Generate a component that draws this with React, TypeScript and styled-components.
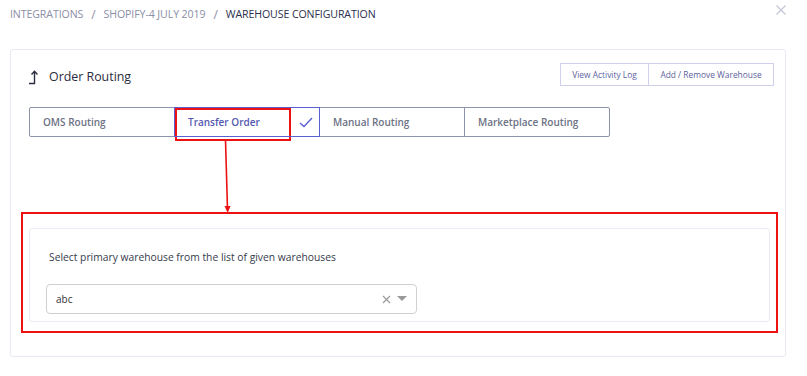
import React, { useState } from 'react';
import styled, { createGlobalStyle } from 'styled-components';

const GlobalStyle = createGlobalStyle`
  html, body {
    margin: 0;
    padding: 0;
    background: #ffffff;
    font-family: 'Open Sans', 'Noto Sans', sans-serif;
  }
`;

const Page = styled.div`
  position: relative;
  width: 807px;
  height: 376px;
  overflow: hidden;
  background: #fff;
`;

const TopBar = styled.div`
  display: flex;
  align-items: center;
  justify-content: space-between;
  height: 28px;
  padding: 0 20px 0 10px;
`;

const Crumbs = styled.div`
  display: flex;
  align-items: center;
  gap: 8px;
  font-size: 10.6px;
  letter-spacing: -0.1px;
`;

const Crumb = styled.span<{ $current?: boolean }>`
  color: ${p => (p.$current ? '#2c2f4d' : '#8a8ea6')};
`;

const Slash = styled.span`
  color: #8a8ea6;
  font-size: 12px;
`;

const CloseBtn = styled.button`
  border: none;
  background: none;
  padding: 0;
  width: 12px;
  height: 12px;
  display: flex;
  margin-top: -9px;
  cursor: pointer;
`;

const Card = styled.div`
  margin: 21px 0 0 10px;
  width: 776px;
  box-sizing: border-box;
  border: 1px solid #e9e9f4;
  border-radius: 3px;
  padding: 13px 11px 34px 17px;
`;

const HeaderRow = styled.div`
  display: flex;
  align-items: center;
  justify-content: space-between;
  height: 23px;
`;

const Title = styled.div`
  display: flex;
  align-items: center;
  gap: 8px;
  font-size: 12.4px;
  color: #2a2c40;
  margin-top: 4px;
`;

const ButtonGroup = styled.div`
  display: flex;
`;

const OutlineButton = styled.button<{ $w: number }>`
  width: ${p => p.$w}px;
  height: 23px;
  padding: 0;
  background: #fff;
  border: 1px solid #cfcfee;
  color: #5c5f9e;
  font-family: inherit;
  font-size: 8.4px;
  cursor: pointer;
  & + & {
    margin-left: -1px;
  }
`;

const Tabs = styled.div`
  display: flex;
  margin-top: 21px;
  margin-left: 1px;
`;

const Tab = styled.div<{ $active?: boolean }>`
  position: relative;
  width: 146px;
  height: 30px;
  box-sizing: border-box;
  display: flex;
  align-items: center;
  justify-content: space-between;
  padding: 0 6px 0 13px;
  border: 1px solid ${p => (p.$active ? '#5a5fd2' : '#8d93aa')};
  margin-left: -1px;
  z-index: ${p => (p.$active ? 1 : 0)};
  font-size: 10px;
  font-weight: 600;
  color: ${p => (p.$active ? '#5458b0' : '#6d7285')};
  cursor: pointer;
  &:first-child {
    margin-left: 0;
    border-radius: 2px 0 0 2px;
  }
  &:last-child {
    border-radius: 0 2px 2px 0;
  }
`;

const Panel = styled.div`
  margin: 91px 4px 0 1px;
  height: 94px;
  box-sizing: border-box;
  border: 1px solid #ebebf5;
  border-radius: 3px;
  padding: 20px 0 0 19px;
`;

const Label = styled.div`
  font-size: 10.3px;
  color: #363a4c;
  line-height: 16px;
`;

const SelectBox = styled.div`
  margin-top: 19px;
  width: 371px;
  height: 30px;
  box-sizing: border-box;
  border: 1px solid #cfcfd4;
  border-radius: 4px;
  display: flex;
  align-items: center;
  padding: 0 9px 0 9px;
  margin-left: -3px;
`;

const SelectValue = styled.span`
  flex: 1;
  font-size: 10px;
  color: #333;
`;

const SelectIcons = styled.div`
  display: flex;
  align-items: center;
  gap: 6px;
  color: #999;
`;

// screenshot annotations
const RedBox = styled.div`
  position: absolute;
  border: 2px solid #ee1111;
  box-sizing: border-box;
  pointer-events: none;
`;

const ArrowSvg = styled.svg`
  position: absolute;
  left: 218px;
  top: 139px;
  pointer-events: none;
`;

const tabs = ['OMS Routing', 'Transfer Order', 'Manual Routing', 'Marketplace Routing'];

export default function App() {
  const [active, setActive] = useState(1);
  const [value, setValue] = useState('abc');

  return (
    <Page>
      <GlobalStyle />
      <TopBar>
        <Crumbs>
          <Crumb>INTEGRATIONS</Crumb>
          <Slash>/</Slash>
          <Crumb>SHOPIFY-4 JULY 2019</Crumb>
          <Slash>/</Slash>
          <Crumb $current>WAREHOUSE CONFIGURATION</Crumb>
        </Crumbs>
        <CloseBtn aria-label="close">
          <svg width="12" height="12" viewBox="0 0 12 12">
            <path d="M1.5 1.5 L10.5 10.5 M10.5 1.5 L1.5 10.5" stroke="#c3c7d6" strokeWidth="1.3" />
          </svg>
        </CloseBtn>
      </TopBar>

      <Card>
        <HeaderRow>
          <Title>
            <svg width="13" height="16" viewBox="0 0 13 16" fill="none">
              <path d="M1 14.5 H6.5 V2.5 M3.5 5.5 L6.5 2.3 L9.5 5.5" stroke="#2a2c40" strokeWidth="1.4" />
            </svg>
            Order Routing
          </Title>
          <ButtonGroup>
            <OutlineButton $w={89}>View Activity Log</OutlineButton>
            <OutlineButton $w={126}>Add / Remove Warehouse</OutlineButton>
          </ButtonGroup>
        </HeaderRow>

        <Tabs>
          {tabs.map((t, i) => (
            <Tab key={t} $active={i === active} onClick={() => setActive(i)}>
              {t}
              {i === active && (
                <svg width="14" height="11" viewBox="0 0 14 11" fill="none">
                  <path d="M1 6 L5 9.5 L13 1" stroke="#5a5fd2" strokeWidth="1.4" />
                </svg>
              )}
            </Tab>
          ))}
        </Tabs>

        <Panel>
          <Label>Select primary warehouse from the list of given warehouses</Label>
          <SelectBox>
            <SelectValue>{value}</SelectValue>
            <SelectIcons>
              <svg width="9" height="9" viewBox="0 0 9 9" onClick={() => setValue('')}>
                <path d="M1 1 L8 8 M8 1 L1 8" stroke="#9a9a9a" strokeWidth="1.2" />
              </svg>
              <svg width="10" height="6" viewBox="0 0 10 6">
                <path d="M0 0 H10 L5 5 Z" fill="#999" />
              </svg>
            </SelectIcons>
          </SelectBox>
        </Panel>
      </Card>

      <RedBox style={{ left: 175, top: 108, width: 116, height: 33 }} />
      <ArrowSvg width="16" height="76" viewBox="0 0 16 76">
        <path d="M7.5 1 L9.5 70" stroke="#ee1111" strokeWidth="1.6" />
        <path d="M6.5 67 L12.5 67 L9.7 74 Z" fill="#ee1111" />
      </ArrowSvg>
      <RedBox style={{ left: 21, top: 212, width: 757, height: 121 }} />
    </Page>
  );
}
